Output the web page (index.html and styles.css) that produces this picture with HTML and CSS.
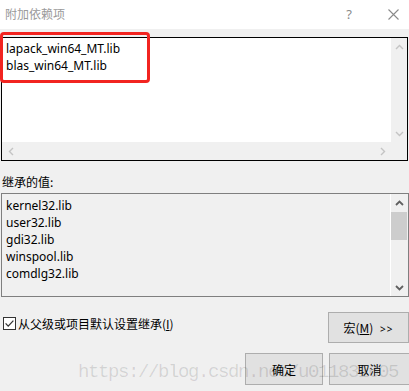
FILE: index.html
```html
<!DOCTYPE html>
<html lang="zh-CN">
<head>
<meta charset="utf-8">
<title>附加依赖项</title>
<link rel="stylesheet" href="styles.css">
</head>
<body>
<div class="dialog">
  <div class="titlebar">
    <span class="title">附加依赖项</span>
    <span class="help">?</span>
    <svg class="close" width="11" height="11" viewBox="0 0 11 11"><path d="M0.5 0.5 L10.5 10.5 M10.5 0.5 L0.5 10.5" stroke="#8a8a8a" stroke-width="1.1" fill="none"/></svg>
  </div>

  <div class="content">
    <div class="edit-wrap">
      <div class="edit">
        <div class="edit-text">
          <div>lapack_win64_MT.lib</div>
          <div>blas_win64_MT.lib</div>
        </div>
        <div class="vscroll off">
          <span class="arrow"><svg width="9" height="6" viewBox="0 0 9 6"><path d="M1 5 L4.5 1.5 L8 5" /></svg></span>
          <span class="arrow"><svg width="9" height="6" viewBox="0 0 9 6"><path d="M1 1 L4.5 4.5 L8 1" /></svg></span>
        </div>
        <div class="hscroll off">
          <span class="arrow"><svg width="6" height="9" viewBox="0 0 6 9"><path d="M5 1 L1.5 4.5 L5 8" /></svg></span>
          <span class="arrow"><svg width="6" height="9" viewBox="0 0 6 9"><path d="M1 1 L4.5 4.5 L1 8" /></svg></span>
        </div>
        <div class="corner"></div>
      </div>
      <div class="highlight"></div>
    </div>

    <div class="label">继承的值:</div>

    <div class="list">
      <div class="list-text">
        <div>kernel32.lib</div>
        <div>user32.lib</div>
        <div>gdi32.lib</div>
        <div>winspool.lib</div>
        <div>comdlg32.lib</div>
      </div>
      <div class="vscroll on">
        <span class="arrow"><svg width="9" height="6" viewBox="0 0 9 6"><path d="M1 5 L4.5 1.5 L8 5" /></svg></span>
        <span class="thumb"></span>
        <span class="spacer"></span>
        <span class="arrow"><svg width="9" height="6" viewBox="0 0 9 6"><path d="M1 1 L4.5 4.5 L8 1" /></svg></span>
      </div>
    </div>

    <div class="row-options">
      <label class="check">
        <svg class="box" width="13" height="13" viewBox="0 0 13 13"><rect x="0.5" y="0.5" width="12" height="12" fill="#fff" stroke="#333"/><path d="M2.6 6.4 L5.2 9.1 L10.4 3.6" fill="none" stroke="#333" stroke-width="1.3"/></svg>
        <span>从父级或项目默认设置继承(<u>I</u>)</span>
      </label>
      <button class="btn wide">宏(<u>M</u>) <span class="chev">&gt;&gt;</span></button>
    </div>

    <div class="row-actions">
      <button class="btn ok">确定</button>
      <button class="btn wide">取消</button>
    </div>
  </div>

  <div class="watermark">https://blog.csdn.net/u011831605</div>
</div>
</body>
</html>
```

FILE: styles.css
```css
html, body {
  margin: 0;
  padding: 0;
}
body {
  width: 409px;
  height: 391px;
  overflow: hidden;
  background: #f0f0f0;
  font-family: "Noto Sans", "Noto Sans CJK SC", sans-serif;
  font-size: 12px;
  color: #000;
}
.dialog {
  position: relative;
  width: 409px;
  height: 391px;
  overflow: hidden;
}
.titlebar {
  height: 29px;
  background: #fff;
  display: flex;
  align-items: center;
}
.title {
  font-family: "Noto Sans CJK SC", sans-serif;
  font-size: 12px;
  color: #9a9a9a;
  margin-left: 5px;
  margin-top: -2px;
}
.help {
  margin-left: auto;
  margin-right: 36px;
  margin-top: -2px;
  font-size: 13px;
  color: #8a8a8a;
}
.close {
  margin-right: 10px;
  margin-top: -1px;
}
.content {
  padding-left: 1px;
}
.edit-wrap {
  position: relative;
  padding-top: 8px;
}
.edit {
  width: 407px;
  height: 124px;
  box-sizing: border-box;
  border: 1px solid #000;
  background: #fff;
  display: grid;
  grid-template-columns: 1fr 16px;
  grid-template-rows: 1fr 18px;
}
.edit-text {
  padding: 2px 4px;
  line-height: 17px;
}
.highlight {
  position: absolute;
  left: -1px;
  top: 3px;
  width: 150px;
  height: 51px;
  box-sizing: border-box;
  border: 3px solid #f22420;
  border-radius: 4px;
}
.vscroll {
  background: #f0f0f0;
  display: flex;
  flex-direction: column;
  justify-content: space-between;
  align-items: center;
}
.hscroll {
  background: #f0f0f0;
  display: flex;
  justify-content: space-between;
  align-items: center;
}
.corner {
  background: #f0f0f0;
}
.arrow {
  display: flex;
  align-items: center;
  justify-content: center;
  width: 16px;
  height: 17px;
}
.hscroll .arrow {
  width: 17px;
  height: 18px;
}
.arrow path {
  fill: none;
  stroke-width: 1.4;
}
.off .arrow path {
  stroke: #c4c4c4;
}
.on .arrow path {
  stroke: #606060;
  stroke-width: 1.8;
}
.label {
  font-family: "Noto Sans CJK SC", sans-serif;
  margin-top: 12px;
  line-height: 17px;
  padding-left: 1px;
}
.list {
  margin-top: 3px;
  width: 408px;
  height: 104px;
  box-sizing: border-box;
  border: 1px solid #7f7f7f;
  background: #f0f0f0;
  display: grid;
  grid-template-columns: 1fr 18px;
}
.list-text {
  padding: 3px 4px;
  line-height: 17px;
}
.list .vscroll {
  border-left: 1px solid #fff;
  justify-content: flex-start;
}
.list .arrow {
  width: 17px;
}
.thumb {
  display: block;
  width: 16px;
  height: 28px;
  margin-top: 1px;
  margin-right: 1px;
  background: #cdcdcd;
}
.spacer {
  flex: 1;
}
.row-options {
  margin-top: 15px;
  display: flex;
  justify-content: space-between;
  align-items: flex-start;
}
.check {
  display: flex;
  align-items: center;
  gap: 2px;
  margin-top: 3px;
  margin-left: 2px;
  line-height: 17px;
  font-family: "Noto Sans CJK SC", sans-serif;
}
.check u, .btn u {
  text-underline-offset: 1px;
}
.btn {
  height: 31px;
  box-sizing: border-box;
  border: 1px solid #adadad;
  background: #e1e1e1;
  font-family: "Noto Sans CJK SC", sans-serif;
  font-size: 12px;
  color: #000;
  padding: 0;
  margin: 0;
}
.wide {
  width: 81px;
}
.ok {
  width: 78px;
}
.chev {
  font-family: "Noto Sans", sans-serif;
  font-size: 10px;
  letter-spacing: 1px;
  margin-left: 4px;
}
.row-actions {
  margin-top: 10px;
  display: flex;
  justify-content: flex-end;
  gap: 6px;
  margin-right: -1px;
}
.row-actions .btn {
  height: 32px;
}
.watermark {
  position: absolute;
  left: 78px;
  top: 362px;
  font-family: "Liberation Mono", monospace;
  font-size: 19px;
  letter-spacing: -1.4px;
  line-height: 20px;
  color: rgba(0, 0, 0, 0.12);
  white-space: nowrap;
  pointer-events: none;
}
```
